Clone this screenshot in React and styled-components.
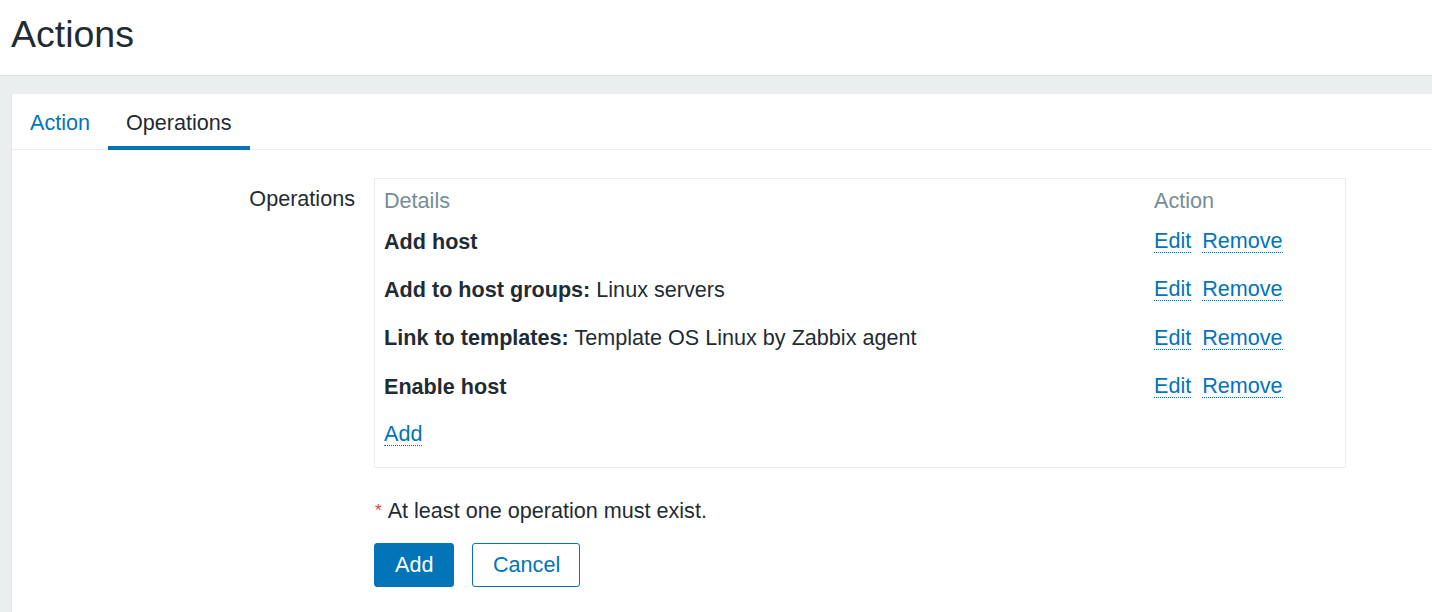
import React from "react";
import styled, { createGlobalStyle } from "styled-components";

const GlobalStyle = createGlobalStyle`
  html, body {
    margin: 0;
    padding: 0;
    background: #ebeeef;
    font-family: "Liberation Sans", Arial, sans-serif;
    color: #1f2c33;
  }
`;

const Header = styled.header`
  height: 76px;
  background: #ffffff;
  border-bottom: 1px solid #dfe4e7;
  display: flex;
  align-items: center;
  padding-left: 11px;
  box-sizing: border-box;
`;

const Title = styled.h1`
  margin: 0;
  font-size: 37.5px;
  font-weight: normal;
  line-height: 1;
  color: #1f2c33;
  padding-bottom: 6px;
`;

const Page = styled.main`
  padding: 18px 0 0 11px;
`;

const Panel = styled.section`
  background: #ffffff;
  border-left: 1px solid #dfe4e7;
  min-height: 540px;
`;

const Tabs = styled.nav`
  display: flex;
  height: 56px;
  border-bottom: 1px solid #ebeeef;
  box-sizing: border-box;
`;

const Tab = styled.a`
  display: flex;
  align-items: center;
  padding: 0 18px;
  font-size: 21.6px;
  cursor: pointer;
  color: ${({ $active }) => ($active ? "#1f2c33" : "#0275b8")};
  border-bottom: 4px solid ${({ $active }) => ($active ? "#0275b8" : "transparent")};
  margin-bottom: -1px;
  padding-top: 5px;
`;

const Form = styled.div`
  display: grid;
  grid-template-columns: 343px 972px;
  column-gap: 19px;
  padding-top: 28px;
  font-size: 21.6px;
`;

const Label = styled.div`
  text-align: right;
  padding-top: 8px;
  line-height: 25px;
`;

const OpsBox = styled.div`
  border: 1px solid #ebeeef;
  padding: 5px 9px 9px;
`;

const Row = styled.div`
  display: grid;
  grid-template-columns: 770px 1fr;
  align-items: center;
  height: ${({ $head }) => ($head ? "33px" : "48.3px")};
  color: ${({ $head }) => ($head ? "#768d99" : "#1f2c33")};
  line-height: 25px;
`;

const Bold = styled.b`
  font-weight: bold;
`;

const Links = styled.div`
  display: flex;
  gap: 11px;
`;

const LinkBtn = styled.a`
  color: #0275b8;
  border-bottom: 1px dotted #0275b8;
  line-height: 23px;
  cursor: pointer;
`;

const Spacer = styled.div``;

const ErrorLine = styled.div`
  margin-top: 30px;
  line-height: 25px;
  display: flex;
  align-items: flex-start;
`;

const Star = styled.span`
  color: #e54335;
  font-size: 17px;
  line-height: 17px;
  margin: 4px 6px 0 1px;
`;

const Buttons = styled.div`
  display: flex;
  gap: 18px;
  margin-top: 20px;
`;

const Button = styled.button`
  height: 44px;
  padding: 0 20px;
  font-family: inherit;
  font-size: 21.6px;
  border-radius: 3px;
  border: 1px solid #0275b8;
  background: ${({ $primary }) => ($primary ? "#0275b8" : "#ffffff")};
  color: ${({ $primary }) => ($primary ? "#ffffff" : "#0275b8")};
  cursor: pointer;
  width: ${({ $width }) => $width};
`;

const operations = [
  { title: "Add host" },
  { title: "Add to host groups:", value: "Linux servers" },
  { title: "Link to templates:", value: "Template OS Linux by Zabbix agent" },
  { title: "Enable host" },
];

export default function App() {
  return (
    <>
      <GlobalStyle />
      <Header>
        <Title>Actions</Title>
      </Header>
      <Page>
        <Panel>
          <Tabs>
            <Tab>Action</Tab>
            <Tab $active>Operations</Tab>
          </Tabs>
          <Form>
            <Label>Operations</Label>
            <OpsBox>
              <Row $head>
                <span>Details</span>
                <span>Action</span>
              </Row>
              {operations.map((op) => (
                <Row key={op.title}>
                  <span>
                    <Bold>{op.title}</Bold>
                    {op.value ? ` ${op.value}` : ""}
                  </span>
                  <Links>
                    <LinkBtn>Edit</LinkBtn>
                    <LinkBtn>Remove</LinkBtn>
                  </Links>
                </Row>
              ))}
              <Row>
                <Links>
                  <LinkBtn>Add</LinkBtn>
                </Links>
              </Row>
            </OpsBox>
            <Spacer />
            <div>
              <ErrorLine>
                <Star>*</Star>
                At least one operation must exist.
              </ErrorLine>
              <Buttons>
                <Button $primary $width="80px">Add</Button>
                <Button $width="108px">Cancel</Button>
              </Buttons>
            </div>
          </Form>
        </Panel>
      </Page>
    </>
  );
}
